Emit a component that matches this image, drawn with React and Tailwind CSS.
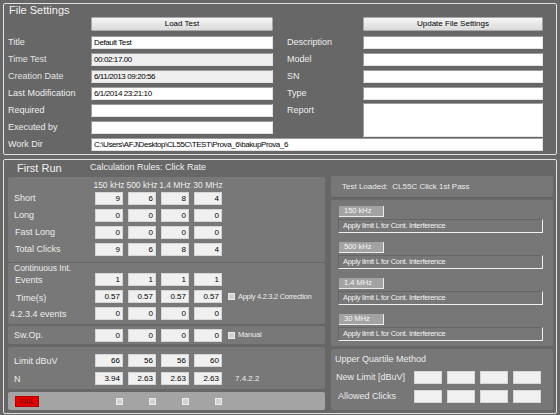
import React from "react";

const FONT = "font-['Liberation_Sans',Arial,sans-serif]";

// campo testo del form (bianco o grigio se sola lettura)
const Field = ({ value = "", ro = false, className = "" }) => (
  <div
    className={`h-[13px] border border-[#9c9c9c] border-b-[#e4e4e4] border-r-[#e4e4e4] px-[2px] text-[8px] leading-[11px] tracking-[-0.4px] text-black whitespace-nowrap overflow-hidden ${
      ro ? "bg-[#efefef]" : "bg-white"
    } ${className}`}
  >
    {value}
  </div>
);

const Num = ({ v = "" }) => (
  <div className="w-[28px] h-[13px] bg-[#f0f0f0] border border-[#d6d6d6] pr-[2px] text-right text-[8px] leading-[11px] text-black">
    {v}
  </div>
);

const Check = () => (
  <div className="w-[7px] h-[7px] bg-[#d2d2d2] border border-[#ececec]" />
);

const Btn = ({ children }) => (
  <div className="h-[14px] bg-gradient-to-b from-[#f6f6f6] to-[#dadada] border border-[#a8a8a8] rounded-[1px] text-center text-[8px] leading-[12px] text-black">
    {children}
  </div>
);

const Label = ({ children, className = "" }) => (
  <div className={`text-[9px] leading-[13px] whitespace-nowrap ${className}`}>{children}</div>
);

function FileSettings() {
  const left = [
    ["Title", "Default Test", false],
    ["Time Test", "00:02:17.00", true],
    ["Creation Date", "6/11/2013 09:20:56", true],
    ["Last Modification", "6/1/2014 23:21:10", false],
    ["Required", "", false],
    ["Executed by", "", false],
  ];
  const right = ["Description", "Model", "SN", "Type"];

  return (
    <div className="h-[152px] border border-[#e2e2e2] rounded-[2px] px-[4px] shrink-0">
      <div className="h-[13px] pl-[1px] text-[11px] leading-[13px] text-[#f2f2f2]">File Settings</div>
      <div className="grid grid-cols-[83px_182px_90px_180px]">
        <div />
        <Btn>Load Test</Btn>
        <div />
        <Btn>Update File Settings</Btn>
      </div>
      <div className="mt-[5px] grid grid-cols-[83px_182px_90px_180px] grid-rows-[repeat(7,13px)] gap-y-[4px]">
        {left.map(([l, v, ro], i) => (
          <React.Fragment key={l}>
            <Label className={ro ? "text-[#e0e0e0]" : "text-[#ededed]"}>{l}</Label>
            <Field value={v} ro={ro} />
            {i < 4 ? (
              <>
                <Label className="pl-[14px] text-[#ededed]">{right[i]}</Label>
                <Field />
              </>
            ) : i === 4 ? (
              <>
                <Label className="pl-[14px] text-[#ededed]">Report</Label>
                <div className="row-span-2 h-[34px] -mt-[1px] bg-white border border-[#9c9c9c] border-b-[#e4e4e4] border-r-[#e4e4e4]" />
              </>
            ) : (
              <div className="col-span-1" />
            )}
          </React.Fragment>
        ))}
        <Label className="text-[#ededed]">Work Dir</Label>
        <Field className="col-span-3" value="C:\Users\AFJ\Desktop\CL55C\TEST\Prova_6\bakupProva_6" />
      </div>
    </div>
  );
}

const NumRow = ({ label, vals, labelClass = "pl-[6px]", children }) => (
  <div className="flex items-center h-[13px]">
    <Label className={`w-[87px] text-[#ececec] ${labelClass}`}>{label}</Label>
    <div className="flex gap-[5px]">
      {vals.map((v, i) => (
        <Num key={i} v={v} />
      ))}
    </div>
    {children}
  </div>
);

function FirstRun() {
  const freqs = ["150 kHz", "500 kHz", "1.4 MHz", "30 MHz"];

  return (
    <div className="h-[255px] border border-[#e2e2e2] rounded-[2px] pl-[4px] pr-[3px] shrink-0">
      <div className="h-[16px] flex items-center text-[#f0f0f0]">
        <div className="w-[82px] pl-[9px] text-[11px]">First Run</div>
        <div className="text-[9px]">Calculation Rules: Click Rate</div>
      </div>
      <div className="flex gap-[6px]">
        {/* colonna sinistra */}
        <div className="w-[317px] mt-[1px] flex flex-col">
          <div className="h-[85px] bg-[#787878] rounded-[2px] pt-[3px]">
            <div className="h-[12px] flex">
              <div className="w-[87px]" />
              <div className="flex gap-[5px]">
                {freqs.map((f) => (
                  <div key={f} className="w-[28px] flex justify-center text-[8.5px] leading-[10px] whitespace-nowrap text-[#ececec]">
                    {f}
                  </div>
                ))}
              </div>
            </div>
            <div className="flex flex-col gap-[4px]">
              <NumRow label="Short" vals={[9, 6, 8, 4]} />
              <NumRow label="Long" vals={[0, 0, 0, 0]} />
              <NumRow label="Fast Long" vals={[0, 0, 0, 0]} labelClass="pl-[7px]" />
              <NumRow label="Total Clicks" vals={[9, 6, 8, 4]} labelClass="pl-[7px]" />
            </div>
          </div>

          <div className="h-[61px] mt-[1px] bg-[#787878] rounded-[2px]">
            <div className="h-[10px] pl-[6px] text-[8.5px] leading-[10px] text-[#ececec]">Continuous Int.</div>
            <div className="flex flex-col gap-[4px]">
              <NumRow label="Events" vals={[1, 1, 1, 1]} labelClass="pl-[7px] pt-[2px]" />
              <NumRow label="Time(s)" vals={["0.57", "0.57", "0.57", "0.57"]} labelClass="pl-[8px] pt-[3px]">
                <div className="ml-[6px] flex items-center gap-[3px]">
                  <Check />
                  <span className="text-[7.5px] tracking-[-0.3px] text-[#ececec]">Apply 4.2.3.2 Correction</span>
                </div>
              </NumRow>
              <NumRow label="4.2.3.4 events" vals={[0, 0, 0, 0]} labelClass="pl-[2px] pt-[2px]" />
            </div>
          </div>

          <div className="h-[18px] mt-[2px] bg-[#787878] rounded-[2px] flex items-center">
            <NumRow label="Sw.Op." vals={[0, 0, 0, 0]}>
              <div className="ml-[6px] flex items-center gap-[3px]">
                <Check />
                <span className="text-[7.5px] tracking-[-0.2px] text-[#ececec]">Manual</span>
              </div>
            </NumRow>
          </div>

          <div className="h-[42px] mt-[3px] bg-[#787878] rounded-[2px] pt-[7px] flex flex-col gap-[5px]">
            <NumRow label="Limit dBuV" vals={[66, 56, 56, 60]} labelClass="pl-[6px] pt-[1px]" />
            <NumRow label="N" vals={["3.94", "2.63", "2.63", "2.63"]} labelClass="pl-[6px] pt-[1px]">
              <span className="ml-[13px] text-[8px] text-[#ececec]">7.4.2.2</span>
            </NumRow>
          </div>

          <div className="h-[18px] mt-[3px] bg-[#a4a4a4] rounded-[2px] flex items-center">
            <div className="w-[87px] pl-[7px]">
              <div className="w-[24px] h-[11px] bg-[#e20000] border border-[#b40000] text-center text-[7px] leading-[9px] text-[#7c0000]">
                FAIL
              </div>
            </div>
            <div className="flex gap-[5px]">
              {freqs.map((f) => (
                <div key={f} className="w-[28px] flex justify-end">
                  <Check />
                </div>
              ))}
            </div>
          </div>
        </div>

        {/* colonna destra */}
        <div className="w-[222px] flex flex-col">
          <div className="h-[22px] bg-[#777777] border-b border-[#606060] rounded-[2px] pl-[11px] flex items-center text-[8px] text-[#ececec] whitespace-nowrap">
            Test Loaded:&nbsp; CL55C Click 1st Pass
          </div>
          <div className="h-[146px] mt-[2px] bg-[#777777] rounded-[2px] pt-[6px] pl-[7px] flex flex-col gap-[9px]">
            {freqs.map((f) => (
              <div key={f} className="flex flex-col gap-[2px]">
                <div className="ml-[1px] w-[45px] h-[11px] bg-[#a3a3a3] border-r border-b border-[#ececec] pl-[5px] text-[7.5px] leading-[10px] text-[#f6f6f6]">
                  {f}
                </div>
                <div className="w-[205px] h-[14px] border border-[#666666] border-b-[#f0f0f0] border-r-[#f0f0f0] pl-[4px] text-[7.5px] leading-[12px] tracking-[-0.3px] text-[#f2f2f2] whitespace-nowrap">
                  Apply limit L for Cont. Interference
                </div>
              </div>
            ))}
          </div>
          <div className="h-[61px] mt-[3px] bg-[#777777] rounded-[2px] pt-[4px]">
            <div className="h-[12px] pl-[4px] text-[9px] leading-[12px] text-[#ececec]">Upper Quartile Method</div>
            <div className="mt-[6px] flex flex-col gap-[6px]">
              {["New Limit [dBuV]", "Allowed Clicks"].map((l, i) => (
                <div key={l} className="flex items-center h-[13px]">
                  <Label className={`w-[83px] text-[#ececec] ${i ? "pl-[7px]" : "pl-[5px]"}`}>{l}</Label>
                  <div className="flex gap-[5px]">
                    {freqs.map((f) => (
                      <div key={f} className="w-[28px] h-[13px] bg-[#f0f0f0] border border-[#d6d6d6]" />
                    ))}
                  </div>
                </div>
              ))}
            </div>
          </div>
        </div>
      </div>
    </div>
  );
}

export default function App() {
  return (
    <div className={`w-[560px] h-[415px] bg-[#676767] p-[3px] flex flex-col gap-[4px] overflow-hidden ${FONT}`}>
      <FileSettings />
      <FirstRun />
    </div>
  );
}
